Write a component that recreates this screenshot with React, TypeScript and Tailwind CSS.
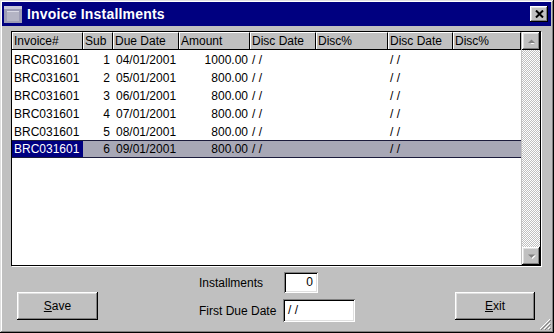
import React from "react";

type Row = {
  invoice: string;
  sub: number;
  due: string;
  amount: string;
};

const rows: Row[] = [
  { invoice: "BRC031601", sub: 1, due: "04/01/2001", amount: "1000.00" },
  { invoice: "BRC031601", sub: 2, due: "05/01/2001", amount: "800.00" },
  { invoice: "BRC031601", sub: 3, due: "06/01/2001", amount: "800.00" },
  { invoice: "BRC031601", sub: 4, due: "07/01/2001", amount: "800.00" },
  { invoice: "BRC031601", sub: 5, due: "08/01/2001", amount: "800.00" },
  { invoice: "BRC031601", sub: 6, due: "09/01/2001", amount: "800.00" },
];

const columns = [
  { label: "Invoice#", w: "w-[71px]" },
  { label: "Sub", w: "w-[30px]" },
  { label: "Due Date", w: "w-[66px]" },
  { label: "Amount", w: "w-[71px]" },
  { label: "Disc Date", w: "w-[66px]" },
  { label: "Disc%", w: "w-[72px]" },
  { label: "Disc Date", w: "w-[65px]" },
  { label: "Disc%", w: "w-[68px]" },
];

const raised =
  "shadow-[inset_-1px_-1px_#000,inset_1px_1px_#fff,inset_-2px_-2px_#808080,inset_2px_2px_#dfdfdf]";
const sunken =
  "shadow-[inset_1px_1px_#808080,inset_-1px_-1px_#fff,inset_2px_2px_#000,inset_-2px_-2px_#dfdfdf]";

function Arrow({ up }: { up?: boolean }) {
  return (
    <svg width="9" height="5" viewBox="0 0 9 5">
      {up ? (
        <>
          <polygon points="1.5,5 4.5,2 7.5,5" fill="#fff" transform="translate(1,1)" />
          <polygon points="1,4 4.5,0.5 8,4" fill="#808080" />
        </>
      ) : (
        <>
          <polygon points="1,1 4.5,4.5 8,1" fill="#fff" transform="translate(1,0.5)" />
          <polygon points="1,0.5 4.5,4 8,0.5" fill="#808080" />
        </>
      )}
    </svg>
  );
}

export default function App() {
  return (
    <div
      className="relative w-[554px] h-[333px] bg-[#c0c0c0] p-[2px] flex flex-col text-[12px] text-black shadow-[inset_-1px_-1px_#000,inset_1px_1px_#dfdfdf,inset_-2px_-2px_#808080,inset_2px_2px_#fff]"
      style={{ fontFamily: '"Liberation Sans", Arial, sans-serif' }}
    >
      {/* TITLE BAR */}
      <div className="h-[24px] mr-[1px] bg-[#000080] flex items-center pl-[2px] pr-[3px]">
        <svg width="18" height="17" viewBox="0 0 18 17" className="shrink-0">
          <rect x="0" y="0" width="18" height="17" fill="#9c9cb4" />
          <rect x="0" y="0" width="18" height="3" fill="#c8c8d8" />
          <rect x="3" y="5" width="12" height="10" fill="#b4b4c4" />
          <rect x="3" y="5" width="12" height="1" fill="#d8d8e4" />
        </svg>
        <span className="ml-[5px] text-white font-bold text-[14px] tracking-[0.2px]">
          Invoice Installments
        </span>
        <div
          className={`ml-auto w-[18px] h-[16px] bg-[#c0c0c0] flex items-center justify-center ${raised}`}
        >
          <svg width="9" height="8" viewBox="0 0 9 8">
            <path d="M1 0.5 L8 7.5 M8 0.5 L1 7.5" stroke="#000" strokeWidth="2" />
          </svg>
        </div>
      </div>

      {/* GRID */}
      <div className="ml-[9px] mt-[5px] w-[530px] h-[235px] border border-black bg-white flex shadow-[1px_1px_#fff]">
        <div className="w-[509px] flex flex-col">
          <div className="flex h-[18px] bg-[#c0c0c0] border-b border-black">
            {columns.map((c, i) => (
              <div
                key={i}
                className={`${c.w} h-full pl-[1px] leading-[17px] border-r border-black border-t border-t-white border-l border-l-white whitespace-nowrap overflow-hidden`}
              >
                {c.label}
              </div>
            ))}
          </div>
          <div className="pt-[1px] flex flex-col">
            {rows.map((r, i) => {
              const sel = i === rows.length - 1;
              return (
                <div
                  key={i}
                  className={`flex h-[18px] ${
                    sel
                      ? "bg-[#a8a8b6] border-y border-[#1c1c3c] leading-[16px] -mt-[1px]"
                      : "leading-[18px]"
                  }`}
                >
                  <div className={`w-[71px] pl-[2px] ${sel ? "bg-[#000080] text-white" : ""}`}>
                    {r.invoice}
                  </div>
                  <div className="w-[30px] text-right pr-[3px]">{r.sub}</div>
                  <div className="w-[66px] pl-[3px]">{r.due}</div>
                  <div className="w-[71px] text-right pr-[2px]">{r.amount}</div>
                  <div className="w-[66px] pl-[2px]">/ /</div>
                  <div className="w-[72px]"></div>
                  <div className="w-[65px] pl-[2px]">/ /</div>
                  <div className="w-[68px]"></div>
                </div>
              );
            })}
          </div>
        </div>

        {/* SCROLLBAR */}
        <div className="w-[19px] flex flex-col border-l border-[#c0c0c0]">
          <div className={`h-[18px] bg-[#c0c0c0] flex items-center justify-center ${raised}`}>
            <Arrow up />
          </div>
          <div className="flex-1 bg-[repeating-conic-gradient(#c0c0c0_0_25%,#fff_0_50%)] bg-[length:2px_2px]"></div>
          <div className={`h-[18px] bg-[#c0c0c0] flex items-center justify-center ${raised}`}>
            <Arrow />
          </div>
        </div>
      </div>

      {/* BOTTOM */}
      <div className="flex flex-1">
        <div className="pl-[15px] pt-[26px]">
          <button
            className={`w-[81px] h-[28px] bg-[#c0c0c0] flex items-center justify-center ${raised}`}
          >
            <span>
              <span className="underline">S</span>ave
            </span>
          </button>
        </div>

        <div className="ml-[101px] pt-[6px] flex flex-col gap-[6px]">
          <div className="flex items-center">
            <span className="w-[85px]">Installments</span>
            <div className={`w-[34px] h-[21px] bg-white text-right pr-[5px] leading-[21px] ${sunken}`}>
              0
            </div>
          </div>
          <div className="flex items-center">
            <span className="w-[84px]">First Due Date</span>
            <div className={`w-[72px] h-[23px] bg-white pl-[5px] leading-[23px] ${sunken}`}>/ /</div>
          </div>
        </div>

        <div className="ml-auto mr-[17px] pt-[26px]">
          <button
            className={`w-[80px] h-[28px] bg-[#c0c0c0] flex items-center justify-center ${raised}`}
          >
            <span>
              <span className="underline">E</span>xit
            </span>
          </button>
        </div>
      </div>

      {/* RESIZE GRIP */}
      <svg
        width="12"
        height="12"
        viewBox="0 0 12 12"
        className="absolute right-[3px] bottom-[3px]"
      >
        <path d="M11 1 L1 11 M11 5 L5 11 M11 9 L9 11" stroke="#fff" strokeWidth="1" />
        <path d="M12 2 L2 12 M12 6 L6 12 M12 10 L10 12" stroke="#808080" strokeWidth="1" />
      </svg>
    </div>
  );
}
